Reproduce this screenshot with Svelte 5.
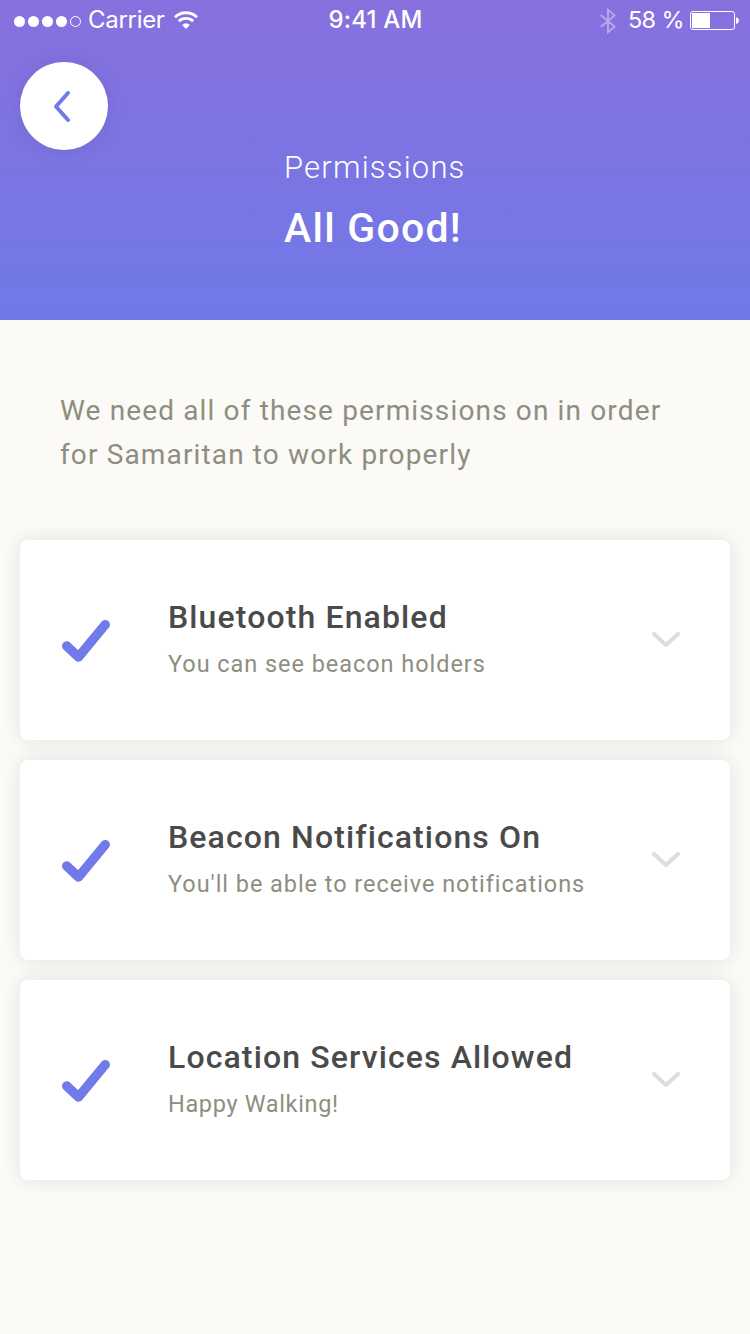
<script>
  const permissions = [
    { title: 'Bluetooth Enabled', detail: 'You can see beacon holders' },
    { title: 'Beacon Notifications On', detail: "You'll be able to receive notifications" },
    { title: 'Location Services Allowed', detail: 'Happy Walking!' }
  ];
</script>

<main>
  <header>
    <div class="status">
      <div class="left">
        <svg class="signal" width="68" height="14" viewBox="0 0 68 14">
          {#each [0, 1, 2, 3] as i}
            <circle cx={5.5 + i * 14} cy="8.5" r="5.5" fill="#fff" />
          {/each}
          <circle cx="61.5" cy="8.5" r="5" fill="none" stroke="#fff" />
        </svg>
        <span class="carrier">Carrier</span>
        <svg class="wifi" width="24" height="18" viewBox="0 0 24 18" fill="none" stroke="#fff" stroke-width="2.9">
          <path d="M1 6.2A15.8 15.8 0 0 1 23 6.2" />
          <path d="M4.8 10.3A10.4 10.4 0 0 1 19.2 10.3" />
          <path d="M12 18L8.2 13.9A5.4 5.4 0 0 1 15.8 13.9Z" fill="#fff" stroke="none" />
        </svg>
      </div>
      <span class="time">9:41 AM</span>
      <div class="right">
        <svg class="bluetooth" width="16" height="26" viewBox="0 0 16 26" fill="none" stroke="#fff" stroke-width="1.9">
          <path d="M.8 7L14.5 18.6L8 24.2V1.8L14.5 7.4L.8 19" />
        </svg>
        <span class="percent">58 %</span>
        <svg class="battery" width="49" height="20" viewBox="0 0 49 20">
          <rect x=".5" y="1.5" width="44" height="18" rx="2.5" fill="none" stroke="#fff" />
          <rect x="2" y="3" width="18" height="15" fill="#fff" />
          <path d="M46 7.3Q49 8.2 49 10.6T46 14Z" fill="#fff" />
        </svg>
      </div>
    </div>
    <button class="back" aria-label="Back">
      <svg width="20" height="34" viewBox="0 0 20 34" fill="none" stroke="#717ae9" stroke-width="4" stroke-linecap="round" stroke-linejoin="round">
        <path d="M16 4L4 17.5L16 31" />
      </svg>
    </button>
    <div class="heading">
      <p>Permissions</p>
      <h1>All Good!</h1>
    </div>
  </header>

  <p class="intro">We need all of these permissions on in order<br />for Samaritan to work properly</p>

  <section>
    {#each permissions as item}
      <article>
        <svg class="check" width="48" height="44" viewBox="0 0 48 44" fill="none" stroke="#717ae9" stroke-width="9.4" stroke-linecap="round" stroke-linejoin="round">
          <path d="M4.7 28L16.5 39L43.3 6.6" />
        </svg>
        <div class="text">
          <h2>{item.title}</h2>
          <p>{item.detail}</p>
        </div>
        <svg class="chevron" width="28" height="16" viewBox="0 0 28 16" fill="none" stroke="#ddd" stroke-width="4" stroke-linecap="round" stroke-linejoin="round">
          <path d="M2 2L14 13L26 2" />
        </svg>
      </article>
    {/each}
  </section>
</main>

<style>
  :global(body) { background: #fbfaf6; }
  main { box-sizing: border-box; width: 750px; height: 1334px; overflow: hidden; background: #fbfaf6; font-family: Roboto, sans-serif; }
  h1, h2, p { margin: 0; }
  svg { display: block; flex: none; }
  header { display: flex; flex-direction: column; height: 320px; background: linear-gradient(#8770de, #7079e8); color: #fff; }
  .status { display: grid; grid-template-columns: 1fr auto 1fr; height: 40px; align-items: center; padding: 0 11px 0 14px; font: 24px/40px Inter, sans-serif; }
  .left, .right { display: flex; align-items: center; }
  .right { justify-content: flex-end; }
  .carrier { margin: 0 9px 0 6px; letter-spacing: -.3px; }
  .time { position: relative; left: -1px; font-weight: 500; letter-spacing: .2px; }
  .bluetooth { opacity: .4; margin: 2px 12px 0 0; }
  .percent { margin-right: 6px; font-size: 23.5px; letter-spacing: -.6px; }
  .back { display: flex; align-items: center; justify-content: center; width: 88px; height: 88px; margin: 22px 0 0 20px; padding: 0 4px 0 0; border: 0; border-radius: 50%; background: #fff; box-shadow: 0 0 20px rgba(0, 0, 0, .08); }
  .heading { width: 182px; margin-left: 284px; white-space: nowrap; }
  .heading p { font-size: 31px; line-height: 36px; font-weight: 350; letter-spacing: 1.2px; }
  h1 { margin-top: 18px; font-size: 41px; line-height: 48px; font-weight: 500; letter-spacing: 1.25px; }
  .intro { padding: 69px 60px 0; height: 151px; font-size: 28px; line-height: 44px; letter-spacing: 1.14px; color: #8e8e80; white-space: nowrap; }
  section { display: grid; gap: 20px; padding: 0 20px; }
  article { display: flex; align-items: center; box-sizing: border-box; height: 200px; padding: 0 50px 0 42px; border-radius: 8px; background: #fff; box-shadow: 0 0 20px rgba(0, 0, 0, .1); }
  .text { flex: 1; margin: 0 0 4px 58px; white-space: nowrap; }
  h2 { font-size: 32px; line-height: 44px; font-weight: 500; letter-spacing: 1.12px; color: #4a4a4a; }
  .text p { margin-top: 7px; font-size: 23.5px; line-height: 36px; letter-spacing: .95px; color: #8e8e80; }
  article:last-child p { letter-spacing: .65px; }
</style>
